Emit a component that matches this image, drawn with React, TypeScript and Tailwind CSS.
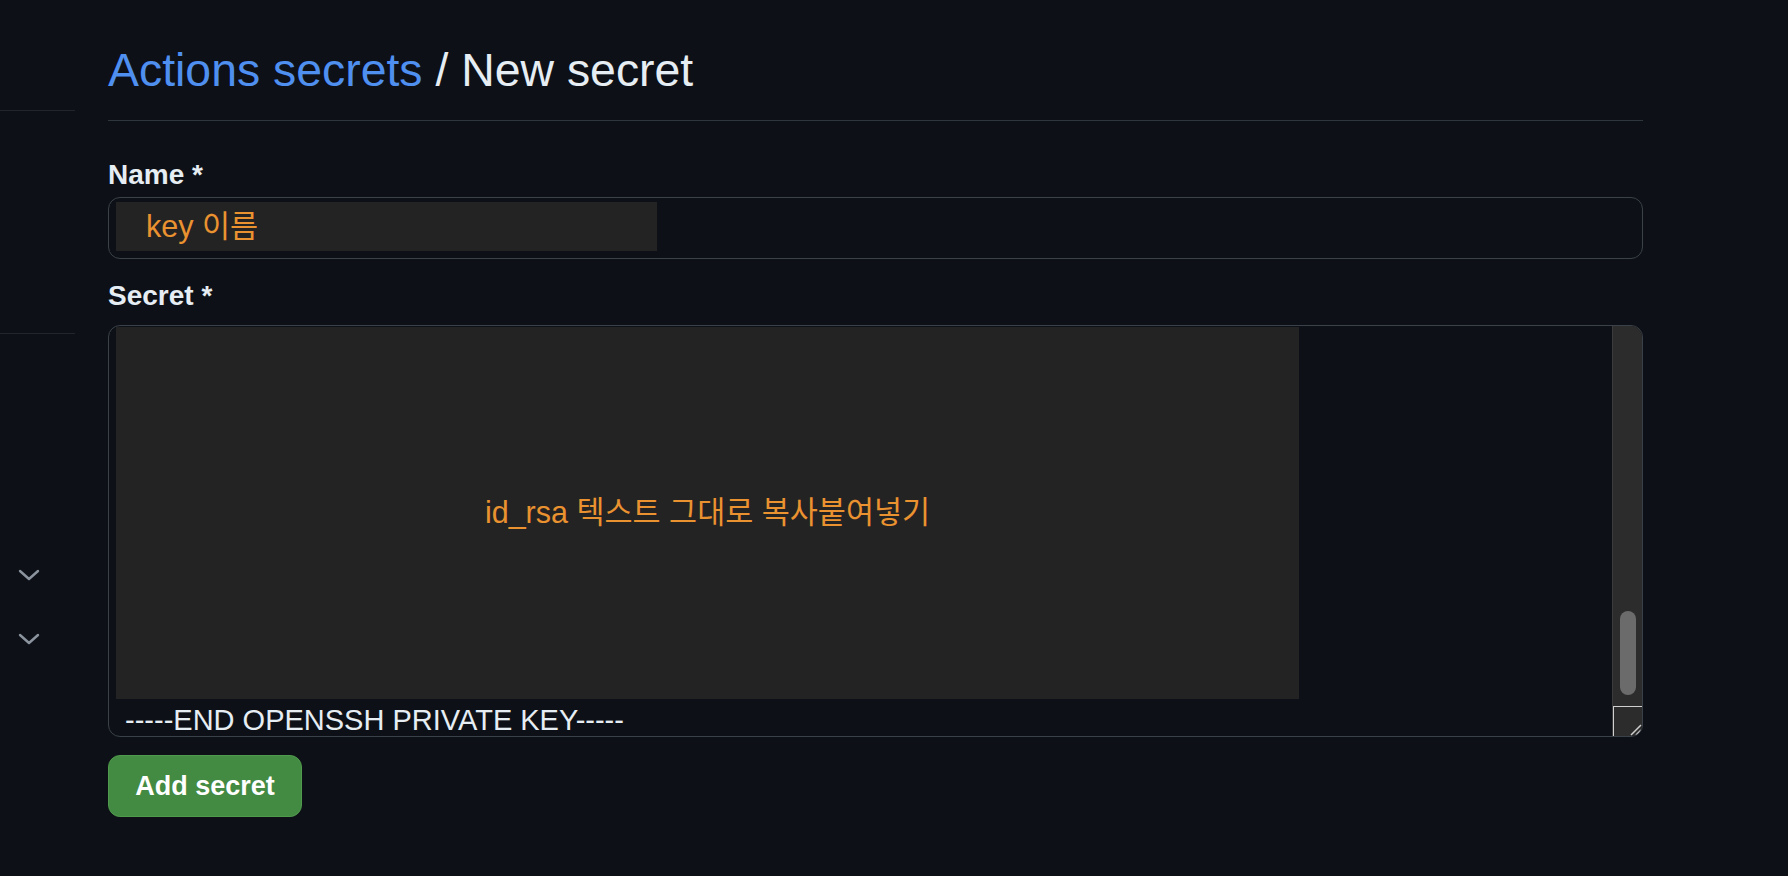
import React from "react";

const Chevron = () => (
  <svg width="22" height="12" viewBox="0 0 22 12" fill="none">
    <path d="M2 2 L11 10 L20 2" stroke="#8b949e" strokeWidth="2.4" strokeLinecap="round" strokeLinejoin="round" />
  </svg>
);

const Sidebar = () => (
  <div className="w-[75px] shrink-0 flex flex-col">
    <div className="mt-[110px] h-px bg-[#21262d]" />
    <div className="mt-[222px] h-px bg-[#21262d]" />
    {/* collapsed nav groups */}
    <div className="mt-[231px] h-[20px] flex items-center justify-start pl-[18px]">
      <Chevron />
    </div>
    <div className="mt-[44px] h-[20px] flex items-center justify-start pl-[18px]">
      <Chevron />
    </div>
  </div>
);

export default function App() {
  return (
    <div
      className="min-h-screen w-full bg-[#0d1117] flex text-[#e6edf3]"
      style={{ fontFamily: '"Liberation Sans", Arial, "Noto Sans CJK KR", sans-serif' }}
    >
      <Sidebar />
      <main className="ml-[33px] w-[1535px] shrink-0 pt-[42px]">
        <div className="pb-[22px] border-b border-[#30363d]">
          <h2 className="text-[46.4px] leading-[56px] font-normal">
            <span className="text-[#4f8ff0]">Actions secrets</span>
            <span> / New secret</span>
          </h2>
        </div>

        <form className="flex flex-col" onSubmit={(e) => e.preventDefault()}>
          <label className="mt-[37px] text-[28px] leading-[34px] font-bold">Name *</label>
          <div className="mt-[5px] h-[62px] border border-[#3b4149] rounded-[12px] pl-[7px] pt-[4px]">
            <div className="w-[541px] h-[49px] bg-[#232323] pl-[30px] flex items-center text-[30.5px] text-[#ea9230]">
              key 이름
            </div>
          </div>

          <label className="mt-[20px] text-[28px] leading-[34px] font-bold">Secret *</label>
          <div className="mt-[12px] h-[412px] border border-[#3b4149] rounded-[12px] flex overflow-hidden">
            <div className="flex-1 flex flex-col pl-[7px] pt-px overflow-hidden">
              <div className="shrink-0 w-[1183px] h-[372px] bg-[#232323] flex items-center justify-center text-[30.5px] text-[#ea9230]">
                id_rsa 텍스트 그대로 복사붙여넣기
              </div>
              <div className="shrink-0 pl-[9px] pt-[4px] text-[29px] leading-[34px] text-[#e6edf3] whitespace-nowrap">
                -----END OPENSSH PRIVATE KEY-----
              </div>
            </div>
            {/* scrollbar + resize grip */}
            <div className="w-[30px] flex flex-col bg-[#2c2c2c] border-l border-[#3b3b3b]">
              <div className="flex-1 flex flex-col justify-end items-center pb-[11px]">
                <div className="w-[16px] h-[84px] rounded-full bg-[#6b6b6b]" />
              </div>
              <div className="h-[30px] border border-[#d0d0d0] border-r-0 border-b-0 flex items-end justify-end">
                <svg width="14" height="14" viewBox="0 0 14 14">
                  <path d="M13 3 L3 13 M13 8 L8 13" stroke="#cfcfcf" strokeWidth="1.5" />
                </svg>
              </div>
            </div>
          </div>

          <div className="mt-[18px]">
            <button
              type="submit"
              className="w-[194px] h-[62px] rounded-[12px] bg-[#438a42] border border-[#4f9a4c] text-white text-[27px] font-bold"
            >
              Add secret
            </button>
          </div>
        </form>
      </main>
    </div>
  );
}
